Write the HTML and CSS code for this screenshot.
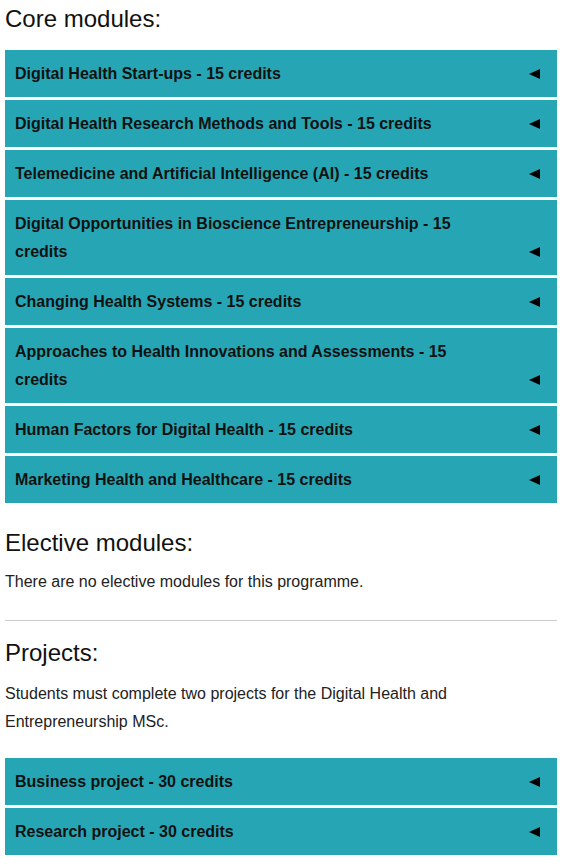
FILE: index.html
```html
<!DOCTYPE html>
<html lang="en">
    <head>
        <meta charset="UTF-8" />
        <meta name="viewport" content="width=device-width, initial-scale=1.0" />
        <title>Digital Health and Entrepreneurship MSc - Modules</title>
        <link rel="stylesheet" href="styles.css">
    </head>
    <body>
        <div class="page">
            <!-- Core modules -->
            <h2 class="section-title first">Core modules:</h2>
            <div class="modules">
                <details class="module"><summary><span class="name">Digital Health Start-ups - 15 credits</span><span class="arrow"></span></summary></details>
                <details class="module"><summary><span class="name">Digital Health Research Methods and Tools - 15 credits</span><span class="arrow"></span></summary></details>
                <details class="module"><summary><span class="name">Telemedicine and Artificial Intelligence (AI) - 15 credits</span><span class="arrow"></span></summary></details>
                <details class="module"><summary><span class="name">Digital Opportunities in Bioscience Entrepreneurship - 15 credits</span><span class="arrow"></span></summary></details>
                <details class="module"><summary><span class="name">Changing Health Systems - 15 credits</span><span class="arrow"></span></summary></details>
                <details class="module"><summary><span class="name">Approaches to Health Innovations and Assessments - 15 credits</span><span class="arrow"></span></summary></details>
                <details class="module"><summary><span class="name">Human Factors for Digital Health - 15 credits</span><span class="arrow"></span></summary></details>
                <details class="module"><summary><span class="name">Marketing Health and Healthcare - 15 credits</span><span class="arrow"></span></summary></details>
            </div>

            <!-- Elective modules -->
            <h2 class="section-title">Elective modules:</h2>
            <p class="note">There are no elective modules for this programme.</p>

            <hr class="divider" />

            <!-- Projects -->
            <h2 class="section-title projects">Projects:</h2>
            <p class="note project-note">Students must complete two projects for the Digital Health and Entrepreneurship MSc.</p>
            <div class="modules project-list">
                <details class="module"><summary><span class="name">Business project - 30 credits</span><span class="arrow"></span></summary></details>
                <details class="module"><summary><span class="name">Research project - 30 credits</span><span class="arrow"></span></summary></details>
            </div>
        </div>
    </body>
</html>
```

FILE: styles.css
```css
html {
    background-color: #ffffff;
}

body {
    margin: 0;
    font-family: "Liberation Sans", Arial, sans-serif;
    color: #1a1a1a;
}

.page {
    width: 552px;
    margin-left: 5px;
}

.section-title {
    font-size: 24px;
    font-weight: normal;
    line-height: 28px;
    margin: 26px 0 0;
    color: #111111;
}

.section-title.first {
    margin-top: 5px;
}

.section-title.projects {
    margin-top: 18px;
}

.modules {
    display: flex;
    flex-direction: column;
    gap: 3px;
    margin-top: 17px;
}

.project-list {
    margin-top: 22px;
}

.module {
    background-color: #26a6b4;
}

.module summary {
    display: flex;
    align-items: flex-end;
    justify-content: space-between;
    gap: 20px;
    padding: 10px 17px 9px 10px;
    list-style: none;
    cursor: pointer;
    font-size: 16px;
    font-weight: bold;
    line-height: 28px;
    color: #111111;
}

.module summary::-webkit-details-marker {
    display: none;
}

.name {
    max-width: 450px;
}

/* left pointing triangle */
.arrow {
    width: 0;
    height: 0;
    margin-bottom: 9px;
    border-top: 5px solid transparent;
    border-bottom: 5px solid transparent;
    border-right: 11px solid #000000;
}

.note {
    font-size: 16px;
    line-height: 28px;
    margin: 11px 0 0;
    color: #222222;
}

.project-note {
    margin-top: 13px;
}

.divider {
    border: 0;
    border-top: 1px solid #cccccc;
    margin: 24px 0 0;
}
```
